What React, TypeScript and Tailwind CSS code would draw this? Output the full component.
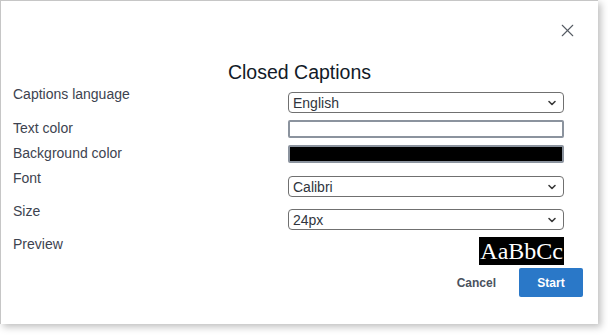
import { ChevronDown, X } from 'lucide-react';

const font = { fontFamily: '"Liberation Sans", Arial, sans-serif' };

function Select({ value }: { value: string }) {
  return (
    <div className="relative mt-[7px] h-[21px] w-[276px] rounded-[4px] border border-[#707070] bg-white">
      <span className="absolute left-[4px] top-[1px] text-[14px] leading-[18px] text-[#30353d]">{value}</span>
      <ChevronDown
        className="absolute right-[5px] top-[4px] h-[12px] w-[12px] text-[#3a3a3a]"
        strokeWidth={3.2}
      />
    </div>
  );
}

function Row({ label, children, className }: { label: string; children: React.ReactNode; className?: string }) {
  return (
    <div className={`flex items-start ${className ?? ''}`}>
      <div className="w-[275px] text-[14px] leading-[18px] text-[#3d4350]">{label}</div>
      {children}
    </div>
  );
}

export default function App() {
  return (
    <div className="h-[335px] w-[608px] bg-white" style={font}>
      <div className="relative flex h-[324px] w-[598px] flex-col border-l border-t border-[#c6c6c6] bg-white shadow-[3px_3px_7px_rgba(0,0,0,0.25)]">
        <button className="absolute right-[20px] top-[19px] text-[#555b63]">
          <X className="h-[21px] w-[21px]" strokeWidth={1.25} />
        </button>
        <h2 className="mt-[60px] text-center text-[19.5px] leading-[23px] text-[#121a28]">Closed Captions</h2>
        <div className="mt-[1px] flex flex-col pl-[12px]">
          <Row label="Captions language">
            <Select value="English" />
          </Row>
          <Row label="Text color" className="mt-[6px]">
            <div className="mt-[1px] h-[18px] w-[276px] rounded-[2px] border-2 border-[#8b939e] bg-white" />
          </Row>
          <Row label="Background color" className="mt-[6px]">
            <div className="mt-[1px] h-[18px] w-[276px] rounded-[2px] border-2 border-[#8b939e] bg-black" />
          </Row>
          <Row label="Font" className="mt-[6px]">
            <Select value="Calibri" />
          </Row>
          <Row label="Size" className="mt-[5px]">
            <Select value="24px" />
          </Row>
          <Row label="Preview" className="mt-[5px]">
            <div className="flex w-[276px] justify-end">
              <div
                className="mt-[2px] bg-black px-[1px] text-[24px] leading-[28px] text-white"
                style={{ fontFamily: '"Liberation Serif", "Times New Roman", serif' }}
              >
                AaBbCc
              </div>
            </div>
          </Row>
        </div>
        <div className="mt-[3px] flex items-center justify-end pr-[15px]">
          <button className="mr-[23px] text-[12px] font-bold text-[#4a525e]">Cancel</button>
          <button className="h-[29px] w-[64px] rounded-[2px] bg-[#2a78c8] text-[12px] font-bold text-white">
            Start
          </button>
        </div>
      </div>
    </div>
  );
}
